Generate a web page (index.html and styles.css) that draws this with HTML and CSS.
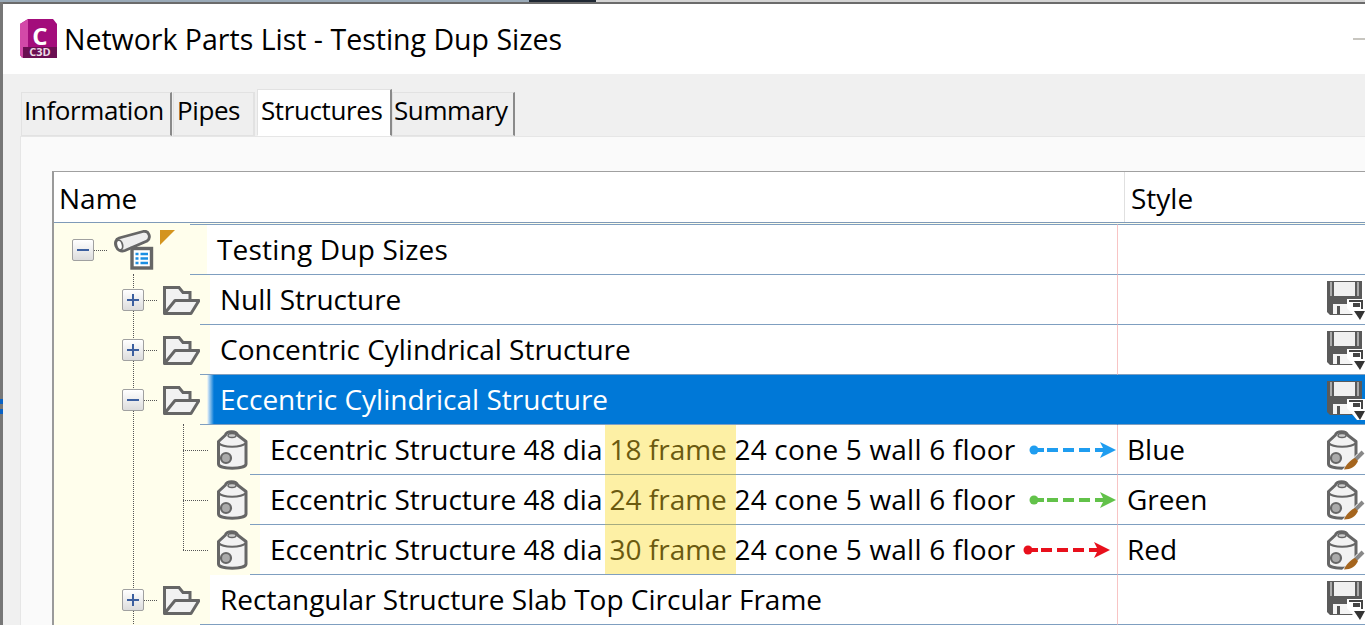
FILE: index.html
```html
<!DOCTYPE html>
<html lang="en">
<head>
  <meta charset="UTF-8" />
  <title>Network Parts List - Testing Dup Sizes</title>
  <link rel="stylesheet" href="styles.css">
</head>
<body>
  <svg class="sprites" xmlns="http://www.w3.org/2000/svg">
    <defs>
      <symbol id="folder" viewBox="0 0 38 29">
        <path d="M1.500 27.500V1.500H16L20 6.500H27V14" fill="#f2f2f2" stroke="#666" stroke-width="3"/>
        <path d="M1.500 27.500L12 14.500H36L28 27.500Z" fill="#f2f2f2" stroke="#666" stroke-width="3" stroke-linejoin="round"/>
      </symbol>
      <symbol id="can" viewBox="0 0 31 40">
        <path d="M8.500 5C8.500 0.500 20.500 0.500 20.500 5L29 11.500V34C29 39.500 1.500 39.500 1.500 34V11.500Z" fill="#f2f2f2" stroke="#666" stroke-width="3" stroke-linejoin="round"/>
        <path d="M1.500 13C6 18 24 18 29 13" fill="none" stroke="#666" stroke-width="2.200"/>
        <ellipse cx="15" cy="5.500" rx="4" ry="2" fill="#ccc" stroke="#666" stroke-width="1.400"/>
        <circle cx="9" cy="28" r="5" fill="#aaa" stroke="#666" stroke-width="2.200"/>
      </symbol>
      <symbol id="arrow" viewBox="0 0 87 20">
        <circle cx="5" cy="10" r="4.500" fill="currentColor"/>
        <path d="M5 10H15M18 10H29M34 10H45M50 10H61M66 10H77" stroke="currentColor" stroke-width="4" fill="none"/>
        <path d="M71 2L87 10L71 18L75 10Z" fill="currentColor"/>
      </symbol>
      <symbol id="save" viewBox="0 0 38 40">
        <path d="M0 1H35V35H3L0 32Z" fill="#5a5a5a"/>
        <rect x="7" y="2" width="21" height="14" fill="#f0f0f0"/>
        <rect x="3" y="2" width="2" height="14" fill="#aaa"/>
        <rect x="30" y="2" width="2" height="14" fill="#aaa"/>
        <rect x="6" y="24" width="20" height="10" fill="#f4f4f4"/>
        <rect x="10" y="26" width="3" height="8" fill="#555"/>
        <path class="notch" d="M20 19H38V40H30L20 28Z"/>
        <path d="M22 21H35V29M27 24H32V26H27Z" fill="none" stroke="#444" stroke-width="2"/>
        <path d="M27 31H38L33 40Z" fill="#333"/>
      </symbol>
      <symbol id="paint" viewBox="0 0 38 40">
        <use href="#can" width="31" height="40"/>
        <path d="M15 40L30 24L38 24V40Z" fill="#fff"/>
        <path d="M26 32L36 22" stroke="#888" stroke-width="4"/>
        <path d="M17 39.500C19 34 24 30 28 28L31 31C29 36 24 39.500 17 39.500Z" fill="#a5651e"/>
      </symbol>
    </defs>
  </svg>

  <div class="strip"></div>

  <div class="window">
    <span class="edge-mark"></span>

    <header class="titlebar">
      <svg class="logo" viewBox="0 0 37 40" xmlns="http://www.w3.org/2000/svg">
        <path d="M0 5L8 0H33L37 5V39H3L0 36Z" fill="#a30d7b"/>
        <path d="M0 5L8 0V28L2 39L0 36Z" fill="#d349a8"/>
        <rect x="3" y="28" width="34" height="11" fill="#6b0f52"/>
        <text class="logo-letter" x="20" y="26" text-anchor="middle">C</text>
        <text class="logo-tag" x="20" y="37" text-anchor="middle">C3D</text>
      </svg>
      <h1 class="title">Network Parts List - Testing Dup Sizes</h1>
      <span class="minimize"></span>
    </header>

    <nav class="tabs">
      <div class="tab tab-information">Information</div>
      <div class="tab tab-pipes">Pipes</div>
      <div class="tab tab-structures active">Structures</div>
      <div class="tab tab-summary">Summary</div>
    </nav>

    <main class="panel">
      <div class="tree">
        <div class="tree-head">
          <div class="head-name">Name</div>
          <div class="head-style">Style</div>
        </div>

        <div class="rows">
          <!-- dotted connectors of the tree -->
          <span class="link link-main"></span>
          <span class="link link-children"></span>

          <div class="row root">
            <div class="gutter">
              <span class="expander open"></span>
              <span class="dots"></span>
              <svg class="root-icon" viewBox="0 0 62 40" xmlns="http://www.w3.org/2000/svg">
                <path d="M6 8L30 1.500C36 0 38.500 8 34 11L12 20.500C3 24 -1 10 6 8Z" fill="#eee" stroke="#666" stroke-width="2.800"/>
                <ellipse cx="6.500" cy="15" rx="3" ry="5" fill="#fff" stroke="#666" stroke-width="1.800" transform="rotate(-15 6.500 15)"/>
                <rect x="19" y="18.500" width="19.500" height="19.500" fill="#fff" stroke="#666" stroke-width="3.400"/>
                <path d="M22.500 24H25.500M27.500 24H35M22.500 28.500H25.500M27.500 28.500H35M22.500 33H25.500M27.500 33H35" stroke="#1c8fe3" stroke-width="2.600"/>
                <path d="M47 0H62L47 15Z" fill="#d4941e"/>
              </svg>
            </div>
            <div class="name"><span class="label">Testing Dup Sizes</span></div>
            <div class="style"></div>
          </div>

          <div class="row group">
            <div class="gutter">
              <span class="expander"></span>
              <span class="dots"></span>
              <svg class="folder"><use href="#folder"/></svg>
            </div>
            <div class="name"><span class="label">Null Structure</span></div>
            <div class="style"><svg class="save"><use href="#save"/></svg></div>
          </div>

          <div class="row group">
            <div class="gutter">
              <span class="expander"></span>
              <span class="dots"></span>
              <svg class="folder"><use href="#folder"/></svg>
            </div>
            <div class="name"><span class="label">Concentric Cylindrical Structure</span></div>
            <div class="style"><svg class="save"><use href="#save"/></svg></div>
          </div>

          <div class="row group selected">
            <div class="gutter">
              <span class="expander open"></span>
              <span class="dots"></span>
              <svg class="folder"><use href="#folder"/></svg>
            </div>
            <div class="name"><span class="label">Eccentric Cylindrical Structure</span></div>
            <div class="style"><svg class="save"><use href="#save"/></svg></div>
          </div>

          <div class="row part">
            <div class="gutter">
              <span class="dots"></span>
              <svg class="can"><use href="#can"/></svg>
            </div>
            <div class="name">
              <span class="label">Eccentric Structure 48 dia</span>
              <span class="frame">18 frame</span>
              <span class="rest">24 cone 5 wall 6 floor</span>
              <svg class="arrow arrow-blue"><use href="#arrow"/></svg>
            </div>
            <div class="style">
              <span class="style-name">Blue</span>
              <svg class="paint"><use href="#paint"/></svg>
            </div>
          </div>

          <div class="row part">
            <div class="gutter">
              <span class="dots"></span>
              <svg class="can"><use href="#can"/></svg>
            </div>
            <div class="name">
              <span class="label">Eccentric Structure 48 dia</span>
              <span class="frame">24 frame</span>
              <span class="rest">24 cone 5 wall 6 floor</span>
              <svg class="arrow arrow-green"><use href="#arrow"/></svg>
            </div>
            <div class="style">
              <span class="style-name">Green</span>
              <svg class="paint"><use href="#paint"/></svg>
            </div>
          </div>

          <div class="row part">
            <div class="gutter">
              <span class="dots"></span>
              <svg class="can"><use href="#can"/></svg>
            </div>
            <div class="name">
              <span class="label">Eccentric Structure 48 dia</span>
              <span class="frame last">30 frame</span>
              <span class="rest">24 cone 5 wall 6 floor</span>
              <svg class="arrow arrow-red"><use href="#arrow"/></svg>
            </div>
            <div class="style">
              <span class="style-name">Red</span>
              <svg class="paint"><use href="#paint"/></svg>
            </div>
          </div>

          <div class="row group">
            <div class="gutter">
              <span class="expander"></span>
              <span class="dots"></span>
              <svg class="folder"><use href="#folder"/></svg>
            </div>
            <div class="name"><span class="label">Rectangular Structure Slab Top Circular Frame</span></div>
            <div class="style"><svg class="save"><use href="#save"/></svg></div>
          </div>
        </div>
      </div>
    </main>
  </div>
</body>
</html>
```

FILE: styles.css
```css
html,
body {
  margin: 0;
  padding: 0;
  height: 625px;
  overflow: hidden;
}

body {
  font-family: 'Open Sans', 'Noto Sans', sans-serif;
  font-size: 28px;
  color: #000;
  background-color: #f0f0f0;
}

.sprites {
  display: none;
}

/* what is left of the desktop above the window */
.strip {
  height: 2px;
  background: linear-gradient(90deg, #9aaab8 529px, #1f2833 529px, #1f2833 596px, #d4d4d4 596px);
}

.window {
  position: relative;
  height: 621px;
  border-left: 3px solid #777;
  box-shadow: inset 0 2px 0 #6b6b6b;
  padding-top: 2px;
}

.edge-mark {
  position: absolute;
  left: -3px;
  top: 397px;
  width: 3px;
  height: 15px;
  background: linear-gradient(#0a62c4 0, #0a62c4 5px, #777 5px, #777 10px, #0a62c4 10px);
}

.titlebar {
  display: flex;
  align-items: center;
  height: 70px;
  padding-left: 17px;
  background: #fff;
}

.logo {
  width: 37px;
  height: 40px;
  margin-top: -1px;
}

.logo-letter {
  font-family: 'Open Sans', sans-serif;
  font-weight: 700;
  font-size: 24px;
  fill: #fff;
}

.logo-tag {
  font-family: 'Open Sans', sans-serif;
  font-weight: 700;
  font-size: 11px;
  fill: #ecdbe6;
}

.title {
  margin: 1px 0 0 7px;
  font-size: 28.5px;
  font-weight: 400;
  line-height: 1;
}

.minimize {
  width: 12px;
  height: 2px;
  margin-left: auto;
  background: #c8c6c0;
}

.tabs {
  display: flex;
  align-items: flex-end;
  gap: 1px;
  height: 62px;
  padding-left: 18px;
}

.tab {
  box-sizing: border-box;
  height: 44px;
  padding-left: 3px;
  font-size: 26px;
  letter-spacing: -0.4px;
  line-height: 34px;
  white-space: nowrap;
  background: #efefef;
  border-top: 1px solid #e2e2e2;
  border-left: 1px solid #e2e2e2;
  border-right: 2px solid #8a8a8a;
  border-bottom: 1px solid #e2e2e2;
}

.tab-information {
  width: 151px;
  padding-left: 2px;
}

.tab-pipes {
  width: 82px;
  border-right-color: #e2e2e2;
}

.tab-structures {
  width: 135px;
  margin-left: 1px;
}

.tab-summary {
  width: 123px;
  margin-left: -1px;
  padding-left: 1px;
}

.tab.active {
  height: 47px;
  line-height: 40px;
  background: #fff;
  border-bottom-color: #fff;
}

.panel {
  box-sizing: border-box;
  height: 489px;
  margin-left: 17px;
  padding: 34px 0 0 31px;
  background: #fafafa;
  border-top: 1px solid #e6e6e6;
  border-left: 1px solid #e6e6e6;
}

.tree {
  height: 454px;
  border-top: 1px solid #a0a0a0;
  border-left: 2px solid #9a9a9a;
  background: #fff;
}

.tree-head {
  display: flex;
  height: 50px;
  border-bottom: 1px solid #7f9ab8;
}

.head-name {
  width: 1065px;
  padding-left: 5px;
  line-height: 52px;
  border-right: 1px solid #e0e0e0;
}

.head-style {
  padding-left: 6px;
  line-height: 52px;
}

.rows {
  position: relative;
  padding-top: 2px;
  background: #fffeec;
}

.link {
  position: absolute;
  width: 0;
  border-left: 1px dotted #555;
}

.link-main {
  left: 79px;
  top: 51px;
  height: 350px;
}

.link-children {
  left: 129px;
  top: 201px;
  height: 126px;
}

.row {
  position: relative;
  display: flex;
  height: 50px;
}

.gutter {
  box-sizing: border-box;
  flex: none;
  display: flex;
  align-items: center;
}

.root .gutter {
  width: 136px;
  padding-left: 18px;
}

.group .gutter {
  width: 146px;
  padding-left: 68px;
}

.part .gutter {
  width: 196px;
  padding-left: 129px;
}

.expander {
  position: relative;
  box-sizing: border-box;
  flex: none;
  width: 22px;
  height: 22px;
  border: 1px solid #a0a0a0;
  border-radius: 2px;
  background: linear-gradient(#fff, #dcdcdc);
}

.expander::before,
.expander::after {
  content: '';
  position: absolute;
  background: #3b5f9f;
}

.expander::before {
  left: 4px;
  top: 9px;
  width: 12px;
  height: 2px;
}

.expander::after {
  left: 9px;
  top: 4px;
  width: 2px;
  height: 12px;
}

.expander.open::after {
  display: none;
}

.dots {
  flex: none;
  width: 13px;
  border-top: 1px dotted #555;
}

.part .dots {
  width: 25px;
}

.root-icon {
  flex: none;
  width: 62px;
  height: 40px;
  margin-left: 6px;
}

.folder {
  flex: none;
  width: 38px;
  height: 29px;
  margin-left: 6px;
}

.can {
  flex: none;
  width: 31px;
  height: 40px;
  margin-left: 9px;
}

.name {
  box-sizing: border-box;
  flex: 1;
  display: flex;
  align-items: center;
  min-width: 0;
  padding-bottom: 2px;
  white-space: nowrap;
  background: linear-gradient(90deg, #fffeec 10px, #fff 10px);
  border-bottom: 1px solid #7f9fc0;
}

.root .name {
  background: linear-gradient(90deg, #fffeec 17px, #fff 17px);
  border-top: 1px solid #7f9fc0;
  margin-top: -1px;
}

.label {
  padding-left: 20px;
}

.root .label {
  padding-left: 27px;
  letter-spacing: 0.2px;
}

.frame {
  align-self: stretch;
  box-sizing: border-box;
  width: 131px;
  margin-left: 3px;
  margin-bottom: -3px;
  padding-left: 4px;
  line-height: 49px;
  color: #6b5a10;
  background: #fdf0a5;
  border-bottom: 1px solid #a5ab80;
}

.frame.last {
  border-bottom-color: #7f9fc0;
}

.rest {
  margin-left: -2px;
  letter-spacing: 0.2px;
}

.arrow {
  flex: none;
  width: 87px;
  height: 20px;
  margin-top: 2px;
  margin-left: auto;
  margin-right: 1px;
}

.arrow-blue {
  color: #1f9df0;
}

.arrow-green {
  color: #62c24a;
}

.arrow-red {
  color: #e8101c;
  margin-right: 7px;
}

.style {
  box-sizing: border-box;
  flex: none;
  display: flex;
  align-items: center;
  justify-content: flex-end;
  width: 248px;
  padding-left: 9px;
  padding-bottom: 2px;
  background: #fff;
  border-left: 1px solid #f8c4c4;
  border-bottom: 1px solid #7f9fc0;
}

.root .style {
  border-top: 1px solid #7f9fc0;
  margin-top: -1px;
}

.style-name {
  margin-right: auto;
}

.save,
.paint {
  flex: none;
  width: 38px;
  height: 40px;
  margin-top: 2px;
}

.notch {
  fill: #fff;
}

.selected .name {
  color: #fff;
  background: linear-gradient(90deg, #fffeec 7px, #d3e6f6 8px, #0078d7 14px);
}

.selected .style {
  background: #0078d7;
  border-left-color: #0078d7;
}

.selected .notch {
  fill: #0078d7;
}
```
